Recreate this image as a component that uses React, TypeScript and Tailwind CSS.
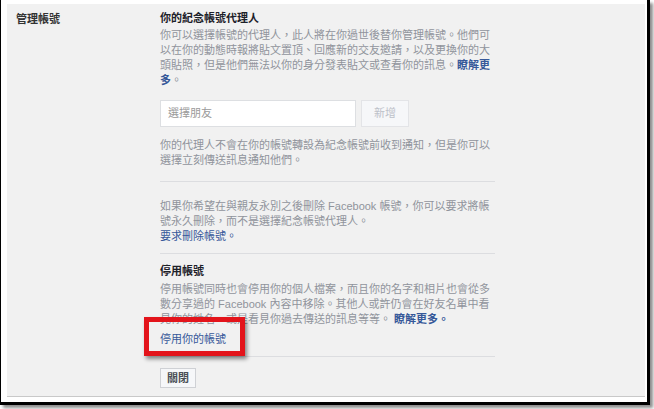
import React from 'react';

const font = { fontFamily: '"Liberation Sans", "Noto Sans CJK TC", sans-serif' };

function Divider({ className = '' }: { className?: string }) {
  return <div className={`h-px bg-[#dcdde0] ${className}`} />;
}

export default function App() {
  return (
    <div className="w-[654px] h-[409px] bg-white" style={font}>
      {/* screenshot frame */}
      <div className="w-[650px] h-[405px] bg-white border-l border-black border-r-[3px] border-b-[3px] shadow-[3px_3px_3px_rgba(0,0,0,0.45)] pt-[4px] pl-[6px] pr-[2px] pb-[5px] flex flex-col">
        <div className="flex-1 bg-[#f1f1f1] border-b border-[#c9c9c9] flex text-[11px] leading-[15px]">
          {/* left label */}
          <div className="w-[153px] pl-[9px] pt-[8px] font-bold text-[#333]">管理帳號</div>

          {/* right column */}
          <div className="w-[335px] pt-[7px] flex flex-col">
            <div className="font-bold text-[#1d2129]">你的紀念帳號代理人</div>
            <p className="mt-[2px] text-[#90949c]">
              你可以選擇帳號的代理人，此人將在你過世後替你管理帳號。他們可<br />
              以在你的動態時報將貼文置頂、回應新的交友邀請，以及更換你的大<br />
              頭貼照，但是他們無法以你的身分發表貼文或查看你的訊息。<span className="font-bold text-[#365899]">瞭解更</span><br />
              <span className="font-bold text-[#365899]">多</span>。
            </p>

            <div className="mt-[12px] flex gap-[5px]">
              <div className="w-[196px] h-[27px] bg-white border border-[#dddfe2] flex items-center pl-[7px] text-[#9a9a9a]">
                選擇朋友
              </div>
              <div className="w-[48px] h-[27px] bg-[#f6f7f9] border border-[#e3e4e7] flex items-center justify-center text-[#bdc1c9]">
                新增
              </div>
            </div>

            <p className="mt-[11px] text-[#90949c]">
              你的代理人不會在你的帳號轉設為紀念帳號前收到通知，但是你可以<br />
              選擇立刻傳送訊息通知他們。
            </p>

            <Divider className="mt-[13px]" />

            <p className="mt-[17px] text-[#90949c]">
              如果你希望在與親友永別之後刪除 Facebook 帳號，你可以要求將帳<br />
              號永久刪除，而不是選擇紀念帳號代理人。<br />
              <span className="text-[#365899]">要求刪除帳號。</span>
            </p>

            <Divider className="mt-[9px]" />

            <div className="mt-[10px] font-bold text-[#1d2129]">停用帳號</div>
            <p className="mt-[3px] text-[#90949c]">
              停用帳號同時也會停用你的個人檔案，而且你的名字和相片也會從多<br />
              數分享過的 Facebook 內容中移除。其他人或許仍會在好友名單中看<br />
              見你的姓名，或是看見你過去傳送的訊息等等。 <span className="font-bold text-[#365899]">瞭解更多。</span>
            </p>

            <div className="relative mt-[5px] text-[#365899]">
              停用你的帳號
              {/* red annotation box */}
              <div className="absolute left-[-16px] top-[-15px] w-[101px] h-[39px] border-[5px] border-[#e3141b] shadow-[2px_3px_4px_rgba(0,0,0,0.45)]" />
            </div>

            <Divider className="mt-[9px]" />

            <div className="mt-[11px]">
              <div className="inline-flex h-[20px] px-[6px] items-center bg-[#f6f7f9] border border-[#cfd1d5] font-bold text-[#4b4f56]">
                關閉
              </div>
            </div>
          </div>
        </div>
      </div>
    </div>
  );
}
